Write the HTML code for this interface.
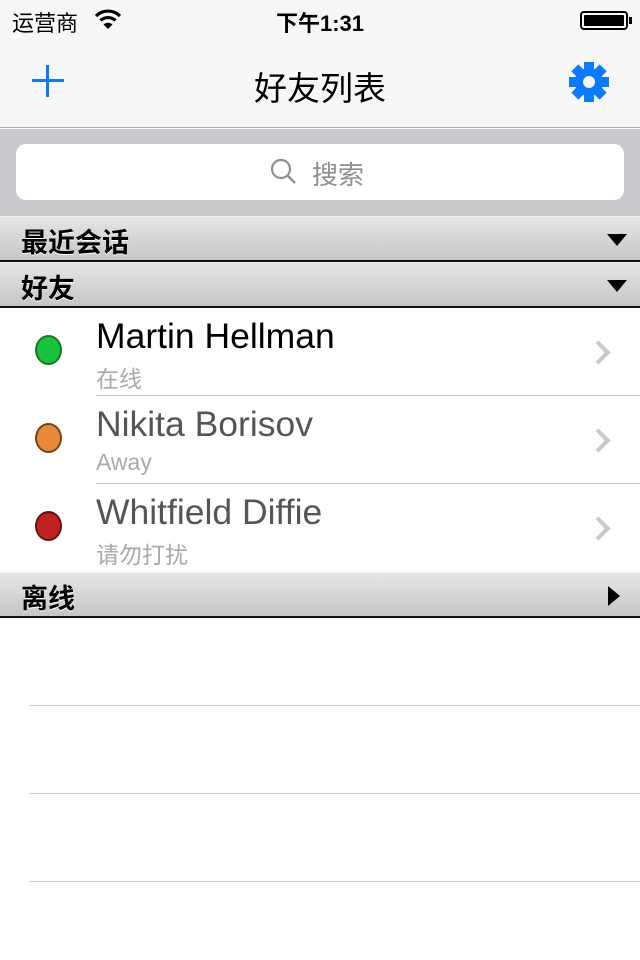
<!DOCTYPE html>
<html><head><meta charset="utf-8"><style>
*{margin:0;padding:0;box-sizing:border-box}
body{width:640px;height:960px;background:#fff;font-family:"Liberation Sans","Noto Sans CJK SC",sans-serif;position:relative;overflow:hidden}
.abs{position:absolute}
.top{left:0;top:0;width:640px;height:128px;background:#f7f7f7;border-bottom:1px solid #a8a8a8}
.sb{top:6px;font-size:22px;color:#000}
.search{left:0;top:129px;width:640px;height:87px;background:#c9c9ce}
.field{left:16px;top:144px;width:608px;height:56px;background:#fff;border-radius:10px}
.hdr{left:0;width:640px;height:46px;background:linear-gradient(#e6e6e6,#c6c6c6);border-top:1px solid #f2f2f2;border-bottom:2px solid #111}
.hdr span{position:absolute;left:21px;top:4px;font-size:27px;font-weight:bold;color:#000;text-shadow:0 1px 0 #fff}
.tri{position:absolute;right:13px;top:17px;width:0;height:0;border-left:10px solid transparent;border-right:10px solid transparent;border-top:12px solid #000}
.name{left:96px;font-size:35.5px}
.sub{left:96px;font-size:23px;color:#aaa}
.sep{height:1px;background:#c8c8c8;right:0}
.dot{left:35px;width:27px;height:30px;border-radius:50%}
.chev{left:590px;width:17px;height:17px;border-right:4px solid #c7c7cc;border-top:4px solid #c7c7cc;transform:rotate(45deg)}
</style></head><body>
<div class="abs top"></div>
<div class="abs sb" style="left:12px">运营商</div>
<svg class="abs" style="left:94px;top:8px" width="28" height="22" viewBox="0 0 28 22"><path d="M2 8 A17 17 0 0 1 26 8" stroke="#000" stroke-width="3.2" fill="none"/><path d="M6.5 12.5 A11 11 0 0 1 21.5 12.5" stroke="#000" stroke-width="3.2" fill="none"/><path d="M14 21 L9.5 16.5 A6.5 6.5 0 0 1 18.5 16.5 Z" fill="#000"/></svg>
<div class="abs sb" style="left:276px;font-weight:bold">下午1:31</div>
<div class="abs" style="left:580px;top:11px;width:48px;height:19px;border:2px solid #000;border-radius:4px;padding:2px"><div style="background:#000;width:100%;height:100%;border-radius:1px"></div></div>
<div class="abs" style="left:629px;top:17px;width:3px;height:7px;background:#000"></div>
<div class="abs" style="left:32px;top:79px;width:32px;height:3px;background:#0a7aff"></div>
<div class="abs" style="left:46px;top:65px;width:3px;height:32px;background:#0a7aff"></div>
<div class="abs" style="left:0;width:640px;text-align:center;top:62px;font-size:33px;color:#000">好友列表</div>
<svg class="abs" style="left:569px;top:62px" width="40" height="40" viewBox="-20 -20 40 40"><g fill="#0a7aff"><circle r="14"/><rect x="-5" y="-20" width="10" height="40"/><rect x="-5" y="-20" width="10" height="40" transform="rotate(45)"/><rect x="-5" y="-20" width="10" height="40" transform="rotate(90)"/><rect x="-5" y="-20" width="10" height="40" transform="rotate(135)"/></g><circle r="6" fill="#f7f7f7"/></svg>
<div class="abs search"></div>
<div class="abs field"></div>
<svg class="abs" style="left:270px;top:158px" width="28" height="28" viewBox="0 0 28 28"><circle cx="11" cy="11" r="9" stroke="#8e8e93" stroke-width="2.2" fill="none"/><path d="M17.5 17.5 L25 25" stroke="#8e8e93" stroke-width="2.4"/></svg>
<div class="abs" style="left:312px;top:155px;font-size:26px;color:#8e8e93">搜索</div>
<div class="abs hdr" style="top:216px"><span>最近会话</span><div class="tri"></div></div>
<div class="abs hdr" style="top:262px"><span>好友</span><div class="tri"></div></div>
<div class="abs dot" style="top:335px;background:#18c23a;border:2px solid #137a27"></div>
<div class="abs name" style="top:316px;color:#000">Martin Hellman</div>
<div class="abs sub" style="top:360px">在线</div>
<div class="abs chev" style="top:344px"></div>
<div class="abs sep" style="left:96px;top:395px"></div>
<div class="abs dot" style="top:423px;background:#e8883a;border:2px solid #7a4318"></div>
<div class="abs name" style="top:404px;color:#555">Nikita Borisov</div>
<div class="abs sub" style="top:449px">Away</div>
<div class="abs chev" style="top:432px"></div>
<div class="abs sep" style="left:96px;top:483px"></div>
<div class="abs dot" style="top:511px;background:#c02222;border:2px solid #6a1010"></div>
<div class="abs name" style="top:492px;color:#555">Whitfield Diffie</div>
<div class="abs sub" style="top:536px">请勿打扰</div>
<div class="abs chev" style="top:520px"></div>
<div class="abs hdr" style="top:572px"><span>离线</span><div style="position:absolute;right:20px;top:13px;width:0;height:0;border-top:10px solid transparent;border-bottom:10px solid transparent;border-left:12px solid #000"></div></div>
<div class="abs sep" style="left:30px;top:705px"></div>
<div class="abs sep" style="left:30px;top:793px"></div>
<div class="abs sep" style="left:30px;top:881px"></div>
</body></html>
